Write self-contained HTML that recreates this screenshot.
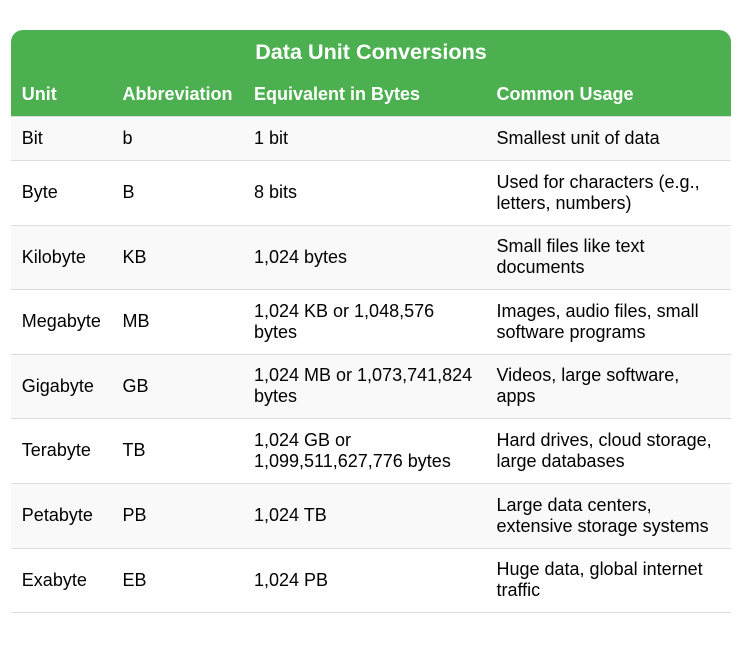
<!DOCTYPE html>
<html lang="en">
<head>
<meta charset="utf-8">
<title>Data Unit Conversions</title>
<style>
html,body{margin:0;padding:0;background:#fff;width:748px;height:647px;overflow:hidden}
body{font-family:"Liberation Sans",Arial,sans-serif;font-size:18px;color:#000}
table{position:absolute;left:11px;top:30px;width:720px;border-collapse:collapse;table-layout:fixed;font-size:18px}
caption{background:#4caf50;color:#fff;font-weight:bold;font-size:21.6px;line-height:25px;padding:9px 0 9.8px;text-align:center;border-radius:12px 12px 0 0}
th,td{padding:10.6px 10.8px 11px;text-align:left;border-bottom:1px solid #ddd}
thead th{background:#4caf50;color:#fff;font-weight:bold;padding-top:10px;padding-bottom:11.6px}
tbody tr:nth-child(odd) td{background:#f9f9f9}
tbody tr:nth-child(even) td{background:#fff}
</style>
</head>
<body>
<table>
<caption>Data Unit Conversions</caption>
<colgroup><col style="width:100.7px"><col style="width:131.5px"><col style="width:242.5px"><col style="width:245.3px"></colgroup>
<thead>
<tr><th>Unit</th><th>Abbreviation</th><th>Equivalent in Bytes</th><th>Common Usage</th></tr>
</thead>
<tbody>
<tr><td>Bit</td><td>b</td><td>1 bit</td><td>Smallest unit of data</td></tr>
<tr><td>Byte</td><td>B</td><td>8 bits</td><td>Used for characters (e.g., letters, numbers)</td></tr>
<tr><td>Kilobyte</td><td>KB</td><td>1,024 bytes</td><td>Small files like text documents</td></tr>
<tr><td>Megabyte</td><td>MB</td><td>1,024 KB or 1,048,576 bytes</td><td>Images, audio files, small software programs</td></tr>
<tr><td>Gigabyte</td><td>GB</td><td>1,024 MB or 1,073,741,824 bytes</td><td>Videos, large software, apps</td></tr>
<tr><td>Terabyte</td><td>TB</td><td>1,024 GB or 1,099,511,627,776 bytes</td><td>Hard drives, cloud storage, large databases</td></tr>
<tr><td>Petabyte</td><td>PB</td><td>1,024 TB</td><td>Large data centers, extensive storage systems</td></tr>
<tr><td>Exabyte</td><td>EB</td><td>1,024 PB</td><td>Huge data, global internet traffic</td></tr>
</tbody>
</table>
</body>
</html>
